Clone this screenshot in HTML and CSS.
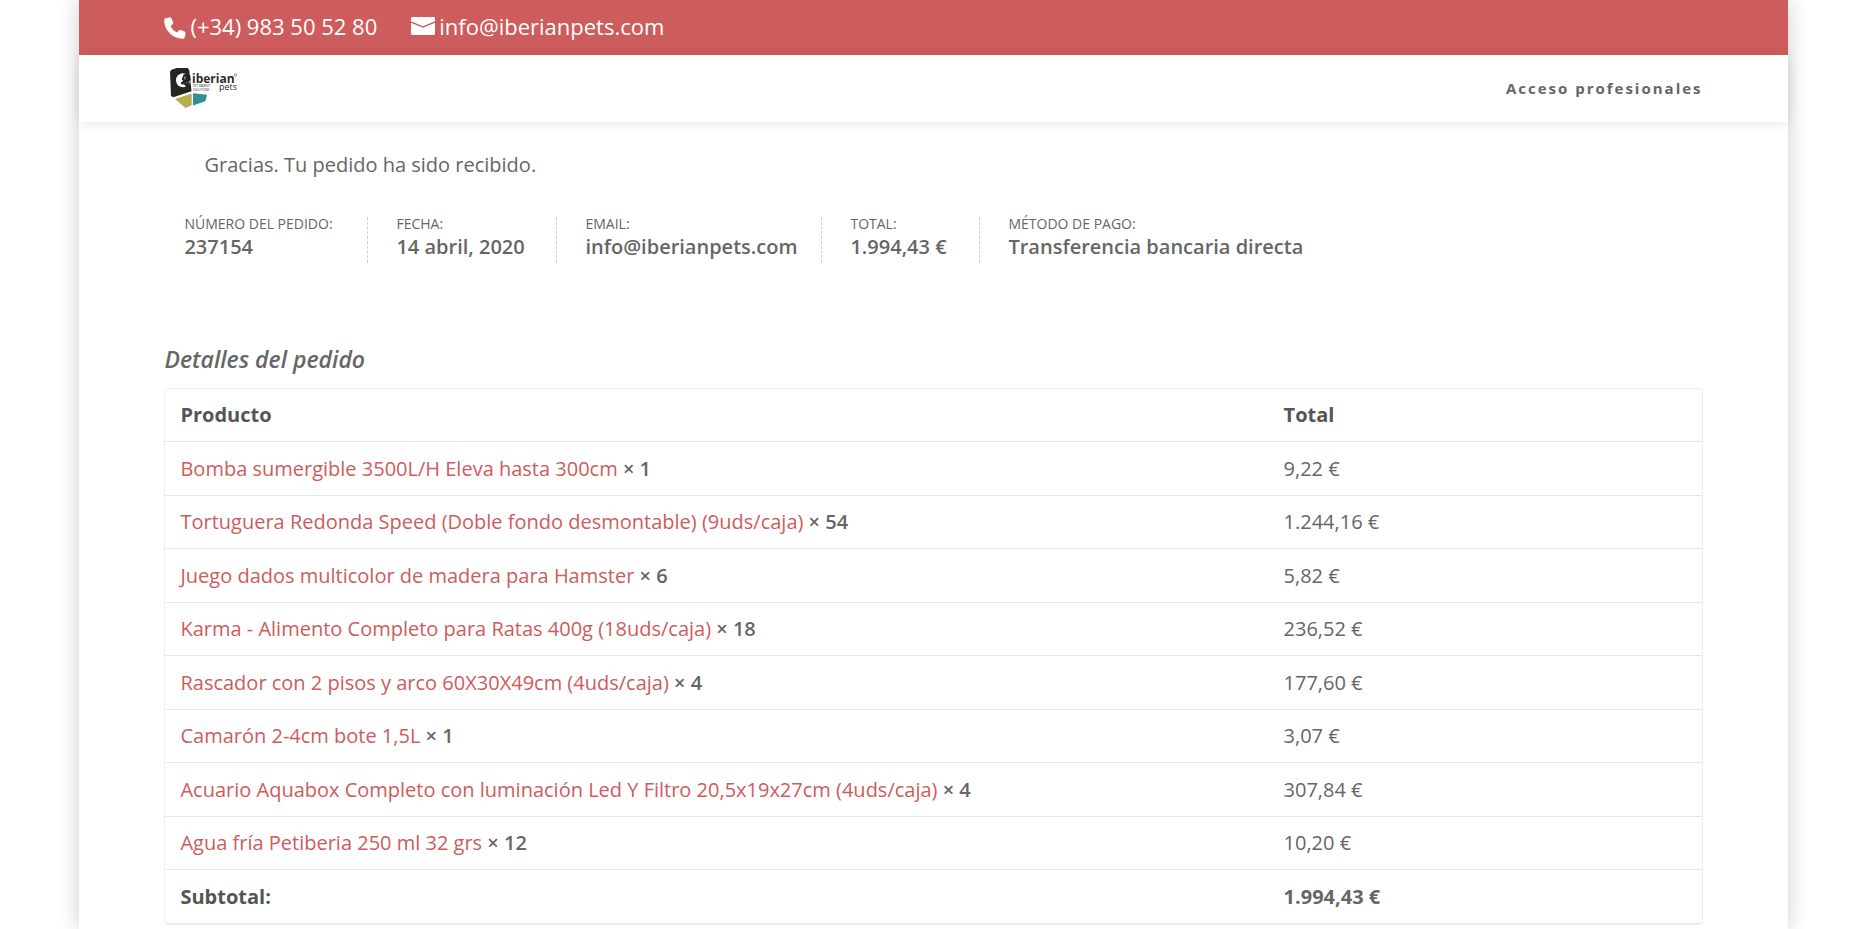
FILE: index.html
```html
<!DOCTYPE html>
<html lang="es">
<head>
<meta charset="utf-8">
<meta name="viewport" content="width=device-width, initial-scale=1">
<title>Pedido recibido - Iberian Pets</title>
<link rel="stylesheet" href="styles.css">
</head>
<body>
<div class="page">
  <div class="topbar">
    <span class="contact">
      <svg class="contact-icon phone" viewBox="0 0 22 22" aria-hidden="true"><path d="M5.200 .4C6.200 .2 7 .7 7.500 1.600L9 5c.4 1 .1 2-.7 2.600L6.600 9c1.200 3 3.400 5.200 6.400 6.400l1.500-1.700c.6-.8 1.600-1 2.600-.6l3.300 1.500c.9.4 1.300 1.200 1.100 2.200l-.8 3.400c-.2.9-.9 1.500-1.900 1.500C8.600 21.800.2 13.400.2 3.200c0-1 .6-1.700 1.500-1.900z"/></svg>
      (+34) 983 50 52 80
    </span>
    <a class="contact" href="mailto:info@iberianpets.com">
      <svg class="contact-icon mail" viewBox="0 0 24 18" aria-hidden="true"><path d="M1.500 0h21C23.400 0 24 .6 24 1.500v2.700L12 9.200 0 4.200V1.500C0 .6.600 0 1.500 0zM0 5.700l12 5 12-5v10.800c0 .9-.6 1.500-1.500 1.500h-21C.6 18 0 17.400 0 16.500z"/></svg>
      info@iberianpets.com
    </a>
  </div>
  <header class="header">
    <a class="logo" href="#" aria-label="Iberian Pets">
      <svg viewBox="0 0 68 42" aria-hidden="true">
        <path fill="#252622" d="M0 4.500 1.500 2.800 6.700 1h11l1.500 2 2.300 21.300L3.300 30.300 1 29z"/>
        <circle cx="13" cy="13.300" r="7" fill="#fff"/>
        <path fill="#252622" d="m13.500 7.500 2.300-.8 4.400 1.600.5 4.700-1.900 1.700.2 3.300-2.200 2.700-2.600-3.200-2.900-.2-.7-1.400 2.700-2.100-1.600-1.200z"/>
        <path fill="#8b8c88" d="m14.300 9 1.800 1.200-.8 2.600-1.100-.6zM16.500 14.500l1 1.600-1.200 1z"/>
        <path fill="#b8ae4e" d="M5 32 21.700 26.500v11.800L15.500 41z"/>
        <path fill="#308f93" d="M23 26.300 37 27.700l-1.700 6.600L23 38.500z"/>
        <text class="logo-name" x="22" y="15.500">iberian</text>
        <text class="logo-sub" x="49" y="23">pets</text>
        <text class="logo-tag" x="23" y="19.500">PET MARKET</text>
        <text class="logo-tag" x="23" y="23.500">SOLUTIONS</text>
        <circle cx="65.500" cy="8" r="1.300" fill="none" stroke="#55554f" stroke-width=".6"/>
      </svg>
    </a>
    <nav><a class="nav-link" href="#">Acceso profesionales</a></nav>
  </header>
  <main class="content">
    <p class="notice">Gracias. Tu pedido ha sido recibido.</p>
    <ul class="overview">
      <li>Número del pedido:<strong>237154</strong></li>
      <li>Fecha:<strong>14 abril, 2020</strong></li>
      <li>Email:<strong>info@iberianpets.com</strong></li>
      <li>Total:<strong>1.994,43 €</strong></li>
      <li>Método de pago:<strong>Transferencia bancaria directa</strong></li>
    </ul>
    <h2 class="title">Detalles del pedido</h2>
    <table class="order">
      <thead>
        <tr><th scope="col">Producto</th><th scope="col">Total</th></tr>
      </thead>
      <tbody>
        <tr><td><a href="#">Bomba sumergible 3500L/H Eleva hasta 300cm</a> <strong>× 1</strong></td><td>9,22 €</td></tr>
        <tr><td><a href="#">Tortuguera Redonda Speed (Doble fondo desmontable) (9uds/caja)</a> <strong>× 54</strong></td><td>1.244,16 €</td></tr>
        <tr><td><a href="#">Juego dados multicolor de madera para Hamster</a> <strong>× 6</strong></td><td>5,82 €</td></tr>
        <tr><td><a href="#">Karma - Alimento Completo para Ratas 400g (18uds/caja)</a> <strong>× 18</strong></td><td>236,52 €</td></tr>
        <tr><td><a href="#">Rascador con 2 pisos y arco 60X30X49cm (4uds/caja)</a> <strong>× 4</strong></td><td>177,60 €</td></tr>
        <tr><td><a href="#">Camarón 2-4cm bote 1,5L</a> <strong>× 1</strong></td><td>3,07 €</td></tr>
        <tr><td><a href="#">Acuario Aquabox Completo con luminación Led Y Filtro 20,5x19x27cm (4uds/caja)</a> <strong>× 4</strong></td><td>307,84 €</td></tr>
        <tr><td><a href="#">Agua fría Petiberia 250 ml 32 grs</a> <strong>× 12</strong></td><td>10,20 €</td></tr>
      </tbody>
      <tfoot>
        <tr><th scope="row">Subtotal:</th><td>1.994,43 €</td></tr>
      </tfoot>
    </table>
  </main>
</div>
</body>
</html>
```
FILE: styles.css
```css
* { box-sizing: border-box; }

html { height: 100%; overflow: hidden; }

body {
  height: 100%;
  margin: 0;
  padding: 0 71px 0 79px;
  background: #fff;
  color: #666;
  font: 400 20px/30px "Open Sans", "Noto Sans", sans-serif;
}

a { color: #cd5c5c; text-decoration: none; }
strong { font-weight: 600; }

.page {
  min-height: 100%;
  background: #fff;
  box-shadow: 0 0 20px rgba(0, 0, 0, .2);
}

.topbar,
.header,
.content { padding-left: 5%; padding-right: 5%; }

.topbar {
  display: flex;
  align-items: center;
  gap: 34px;
  height: 55px;
  padding-bottom: 4px;
  background: #cd5c5c;
}

.contact {
  display: flex;
  align-items: center;
  gap: 4px;
  color: #fff;
  font-size: 22px;
  font-weight: 500;
}

.contact-icon { fill: currentColor; }
.phone { width: 22px; height: 22px; margin-top: 4px; }
.mail { width: 24px; height: 18px; }

.header {
  display: flex;
  align-items: center;
  justify-content: space-between;
  height: 67px;
  padding-bottom: 2px;
  box-shadow: 0 1px 12px rgba(0, 0, 0, .1);
}

.logo { padding-left: 6px; }
.logo svg { display: block; width: 68px; height: 42px; }
.logo text { fill: #2b2c28; font-family: "Open Sans", sans-serif; }
.logo .logo-name { font-size: 12px; font-weight: 700; }
.logo .logo-sub { font-size: 9px; }
.logo .logo-tag { font-size: 3px; }

.nav-link {
  color: #666;
  font-size: 15px;
  font-weight: 700;
  letter-spacing: 2px;
}

.notice { margin: 0; padding: 28px 40px 0; }

.overview {
  display: grid;
  grid-template-columns: 184px 161px 237px 130px auto;
  column-gap: 28px;
  margin: 0;
  padding: 37px 20px 0;
  list-style: none;
}

.overview li {
  font-size: 14px;
  line-height: 14px;
  text-transform: uppercase;
  border-right: 1px dashed #d3ced2;
}

.overview li:last-child { border-right: 0; }

.overview strong {
  display: block;
  font-size: 20px;
  line-height: 32px;
  text-transform: none;
}

.title {
  margin: 0;
  padding: 80px 0 13px;
  font-size: 23px;
  font-style: italic;
  font-weight: 600;
  line-height: 32px;
}

.order {
  width: 100%;
  border: 1px solid #eee;
  border-radius: 5px;
  border-collapse: separate;
  border-spacing: 0;
  table-layout: fixed;
  text-align: left;
}

.order th,
.order td {
  height: 53px;
  padding: 0 15px;
  border-bottom: 1px solid #e5e5e5;
}

.order tbody tr:nth-child(odd) td,
.order tfoot th,
.order tfoot td { height: 54px; }

.order th:last-child { width: 433px; }
.order th { color: #555; }
.order th,
.order tfoot td { font-weight: 700; }
```
